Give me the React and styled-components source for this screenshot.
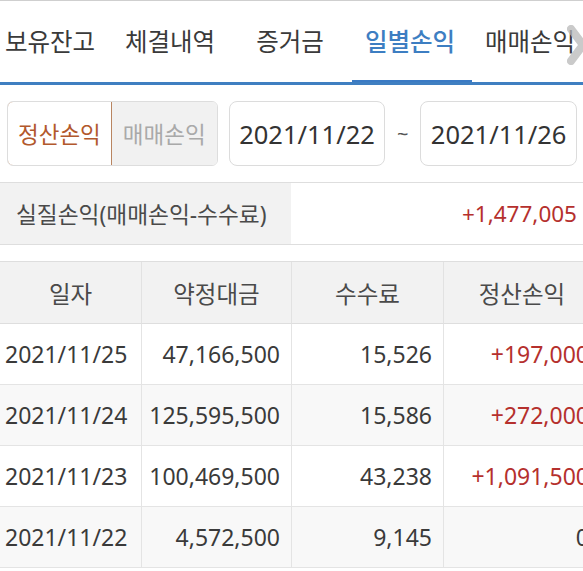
import React from "react";
import styled, { createGlobalStyle, css } from "styled-components";

const GlobalStyle = createGlobalStyle`
  html, body {
    margin: 0;
    padding: 0;
    background: #fff;
  }
  body {
    font-family: "Noto Sans", "Noto Sans CJK KR", sans-serif;
    color: #333;
    overflow: hidden;
  }
`;

const Page = styled.div`
  width: 583px;
  height: 571px;
  overflow: hidden;
  border-top: 1px solid #cfcfcf;
  box-sizing: border-box;
`;

const TabBar = styled.div`
  position: relative;
  height: 81px;
  border-bottom: 3px solid #3f7fc1;
  display: flex;
  overflow: hidden;
`;

const TabTrack = styled.div`
  display: flex;
  margin-left: -10px;
`;

const Tab = styled.div`
  position: relative;
  flex: 0 0 120px;
  display: flex;
  align-items: center;
  justify-content: center;
  font-size: 24.5px;
  color: #3a3a3a;
  padding-bottom: 2px;
  ${(p) =>
    p.$active &&
    css`
      color: #3d7ec2;
      font-weight: 500;
      &::after {
        content: "";
        position: absolute;
        left: 2px;
        right: -2px;
        bottom: -3px;
        height: 5px;
        background: #3a7ac4;
      }
    `}
`;

const ScrollHint = styled.div`
  position: absolute;
  right: -4px;
  top: 24px;
  width: 22px;
  height: 40px;
  opacity: 0.75;
`;

const FilterRow = styled.div`
  display: flex;
  align-items: center;
  padding: 0 6px 0 7px;
  margin-top: 16px;
  height: 65px;
`;

const Segment = styled.div`
  display: flex;
  height: 65px;
  border-radius: 6px;
  overflow: hidden;
  border: 1px solid #ddd;
  box-sizing: border-box;
`;

const SegItem = styled.div`
  width: 105px;
  display: flex;
  align-items: center;
  justify-content: center;
  font-size: 22.5px;
  box-sizing: border-box;
  ${(p) =>
    p.$active
      ? css`
          color: #b2582c;
          background: #fff;
          border: 1px solid #b98561;
          border-radius: 6px 0 0 6px;
          margin: -1px 0 -1px -1px;
        `
      : css`
          color: #a9a9a9;
          background: #f1f1f1;
        `}
`;

const DateBox = styled.div`
  width: 157px;
  height: 65px;
  box-sizing: border-box;
  border: 1px solid #dcdcdc;
  border-radius: 8px;
  display: flex;
  align-items: center;
  justify-content: center;
  font-size: 25.5px;
  color: #333;
  margin-left: ${(p) => p.$ml}px;
`;

const Tilde = styled.div`
  width: 35px;
  text-align: center;
  font-size: 20px;
  color: #555;
`;

const Summary = styled.div`
  margin-top: 16px;
  display: flex;
  height: 61px;
  border-top: 1px solid #dedede;
  border-bottom: 1px solid #dedede;
`;

const SummaryLabel = styled.div`
  width: 291px;
  background: #f2f2f2;
  display: flex;
  align-items: center;
  padding-left: 16px;
  box-sizing: border-box;
  font-size: 22.7px;
  color: #4a4a4a;
`;

const SummaryValue = styled.div`
  flex: 1;
  display: flex;
  align-items: center;
  justify-content: flex-end;
  padding-right: 6px;
  font-size: 22.5px;
  color: #b5302d;
`;

const Table = styled.div`
  margin-top: 16px;
  width: 600px;
  display: grid;
  grid-template-columns: 141px 150px 152px 157px;
  border-top: 1px solid #dedede;
`;

const HeadCell = styled.div`
  height: 62px;
  background: #f2f2f2;
  display: flex;
  align-items: center;
  justify-content: center;
  font-size: 23.5px;
  color: #4a4a4a;
  border-bottom: 1px solid #dedede;
  border-left: ${(p) => (p.$first ? "none" : "1px solid #e2e2e2")};
  box-sizing: border-box;
`;

const Cell = styled.div`
  height: 61px;
  box-sizing: border-box;
  display: flex;
  align-items: center;
  justify-content: ${(p) => (p.$left ? "flex-start" : "flex-end")};
  padding: ${(p) => (p.$left ? "0 0 0 5px" : "0 11px 0 0")};
  font-size: 23px;
  color: ${(p) => (p.$red ? "#b5302d" : "#3a3a3a")};
  background: ${(p) => (p.$alt ? "#f8f8f8" : "#fff")};
  border-bottom: 1px solid #e4e4e4;
  border-left: ${(p) => (p.$left ? "none" : "1px solid #e4e4e4")};
`;

const tabs = ["보유잔고", "체결내역", "증거금", "일별손익", "매매손익"];

const rows = [
  ["2021/11/25", "47,166,500", "15,526", "+197,000"],
  ["2021/11/24", "125,595,500", "15,586", "+272,000"],
  ["2021/11/23", "100,469,500", "43,238", "+1,091,500"],
  ["2021/11/22", "4,572,500", "9,145", "0"],
];

export default function App() {
  return (
    <Page>
      <GlobalStyle />
      <TabBar>
        <TabTrack>
          {tabs.map((t) => (
            <Tab key={t} $active={t === "일별손익"}>
              {t}
            </Tab>
          ))}
        </TabTrack>
        <ScrollHint>
          <svg width="22" height="40" viewBox="0 0 22 40">
            <path
              d="M6 4 L18 20 L6 36"
              fill="none"
              stroke="#b9b9b9"
              strokeWidth="8"
              strokeLinecap="round"
              strokeLinejoin="round"
            />
          </svg>
        </ScrollHint>
      </TabBar>

      <FilterRow>
        <Segment>
          <SegItem $active>정산손익</SegItem>
          <SegItem>매매손익</SegItem>
        </Segment>
        <DateBox $ml={11}>2021/11/22</DateBox>
        <Tilde>~</Tilde>
        <DateBox $ml={0}>2021/11/26</DateBox>
      </FilterRow>

      <Summary>
        <SummaryLabel>실질손익(매매손익-수수료)</SummaryLabel>
        <SummaryValue>+1,477,005</SummaryValue>
      </Summary>

      <Table>
        <HeadCell $first>일자</HeadCell>
        <HeadCell>약정대금</HeadCell>
        <HeadCell>수수료</HeadCell>
        <HeadCell>정산손익</HeadCell>
        {rows.map((r, i) =>
          r.map((v, j) => (
            <Cell
              key={`${i}-${j}`}
              $left={j === 0}
              $red={j === 3 && v.startsWith("+")}
              $alt={i % 2 === 1}
            >
              {v}
            </Cell>
          ))
        )}
      </Table>
    </Page>
  );
}
